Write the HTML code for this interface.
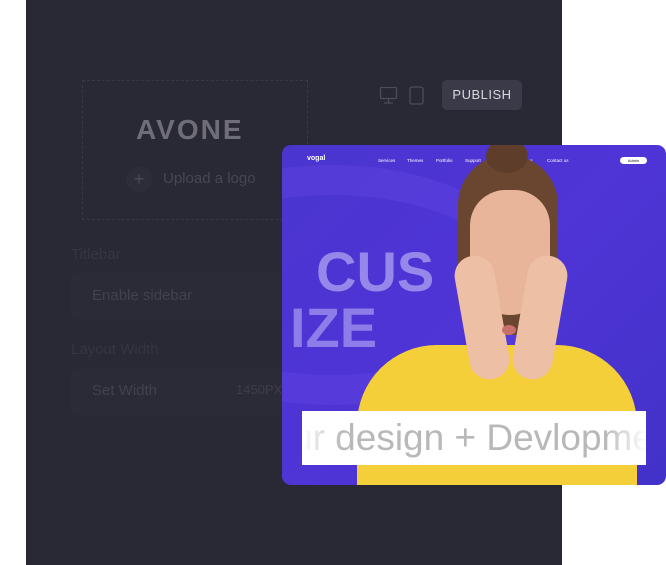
<!DOCTYPE html>
<html><head><meta charset="utf-8"><style>
*{margin:0;padding:0;box-sizing:border-box}
body{width:666px;height:565px;background:#fff;position:relative;overflow:hidden;font-family:"Liberation Sans",sans-serif}
.panel{position:absolute;left:26px;top:0;width:536px;height:565px;background:#292835}
.abs{position:absolute}
.logo{left:82px;top:80px;width:226px;height:140px;border:1px dashed #383745}
.t{color:#44434f;font-size:15px}
.card{left:282px;top:145px;width:384px;height:340px;border-radius:9px;overflow:hidden;background:linear-gradient(135deg,#4a35cf 0%,#4f34d6 50%,#4232c8 100%)}
.nav{font-size:4.5px;color:#fff;top:13px}
</style></head><body>
<div class="panel"></div>
<div class="abs logo"></div>
<div class="abs" style="left:136px;top:114px;font-size:28px;font-weight:bold;color:#6f6e78;letter-spacing:2px">AVONE</div>
<div class="abs" style="left:126px;top:166px;width:26px;height:26px;border-radius:50%;background:#2d2c39;color:#4a4955;font-size:18px;text-align:center;line-height:26px">+</div>
<div class="abs t" style="left:163px;top:170px;color:#474652">Upload a logo</div>
<div class="abs t" style="left:71px;top:246px;color:#363541">Titlebar</div>
<div class="abs" style="left:71px;top:273px;width:230px;height:46px;background:#2b2a37;border-radius:4px"></div>
<div class="abs t" style="left:92px;top:287px;color:#42414d">Enable sidebar</div>
<div class="abs t" style="left:71px;top:341px;color:#363541">Layout Width</div>
<div class="abs" style="left:71px;top:369px;width:230px;height:46px;background:#2b2a37;border-radius:4px"></div>
<div class="abs t" style="left:92px;top:382px;color:#42414d">Set Width</div>
<div class="abs" style="left:236px;top:382px;font-size:13px;color:#3e3d49">1450PX</div>
<svg class="abs" style="left:379px;top:86px" width="46" height="20"><rect x="1.5" y="1.5" width="16" height="11" rx="1" fill="none" stroke="#4d4c58" stroke-width="1.3"/><path d="M9.5 13v4M5 17h9" stroke="#4d4c58" stroke-width="1.3"/><rect x="31" y="1" width="13" height="17" rx="2" fill="none" stroke="#4d4c58" stroke-width="1.3"/></svg>
<div class="abs" style="left:442px;top:80px;width:80px;height:30px;background:#3b3a48;border-radius:5px;color:#d8d8de;font-size:13px;text-align:center;line-height:30px;letter-spacing:.5px">PUBLISH</div>
<div class="abs card">
 <div class="abs" style="left:-160px;top:20px;width:420px;height:240px;border-radius:50%;border:30px solid rgba(110,80,235,.25)"></div>
 <div class="abs" style="left:25px;top:10px;font-size:7px;font-weight:bold;color:#fff">vogal</div>
 <div class="abs nav" style="left:96px">Services</div>
 <div class="abs nav" style="left:125px">Themes</div>
 <div class="abs nav" style="left:154px">Portfolio</div>
 <div class="abs nav" style="left:183px">Support</div>
 <div class="abs nav" style="left:212px">Blog</div>
 <div class="abs nav" style="left:233px">About us</div>
 <div class="abs nav" style="left:265px">Contact us</div>
 <div class="abs" style="left:338px;top:12px;width:27px;height:7px;border-radius:4px;background:#fff;font-size:4px;color:#222;text-align:center;line-height:7px">Admin</div>
 <div class="abs" style="left:34px;top:94px;font-size:56px;font-weight:bold;color:#a99cf0;opacity:.8">CUS</div>
 <div class="abs" style="left:8px;top:150px;font-size:56px;font-weight:bold;color:#9e90ee;opacity:.8">IZE</div>
 <!-- woman -->
 <div class="abs" style="left:75px;top:200px;width:280px;height:200px;border-radius:80px 80px 0 0;background:#f4cf3a"></div>
 <div class="abs" style="left:176px;top:10px;width:100px;height:180px;border-radius:50px 50px 40px 40px;background:#6a4630"></div>
 <div class="abs" style="left:204px;top:-6px;width:42px;height:34px;border-radius:50%;background:#5e3e2a"></div>
 <div class="abs" style="left:188px;top:45px;width:80px;height:125px;border-radius:40px 40px 45px 45px;background:#e8b49a"></div>
 <div class="abs" style="left:180px;top:110px;width:40px;height:125px;border-radius:20px;background:#edbfa5;transform:rotate(-10deg)"></div>
 <div class="abs" style="left:238px;top:110px;width:40px;height:125px;border-radius:20px;background:#edbfa5;transform:rotate(10deg)"></div>
 <div class="abs" style="left:220px;top:180px;width:14px;height:10px;border-radius:50%;background:#c9706a"></div>
 <div class="abs" style="left:20px;top:266px;width:344px;height:54px;background:#fff;border-radius:2px"></div>
 <div class="abs" style="left:20px;top:266px;width:344px;height:54px;overflow:hidden;white-space:nowrap;font-size:37px;color:#b8b8b8;line-height:54px;text-indent:-10px">ur design + Devlopment</div>
 <div class="abs" style="left:20px;top:266px;width:344px;height:54px;background:linear-gradient(90deg,#fff 0%,rgba(255,255,255,0) 12%,rgba(255,255,255,0) 88%,#fff 100%)"></div>
</div>
</body></html>
